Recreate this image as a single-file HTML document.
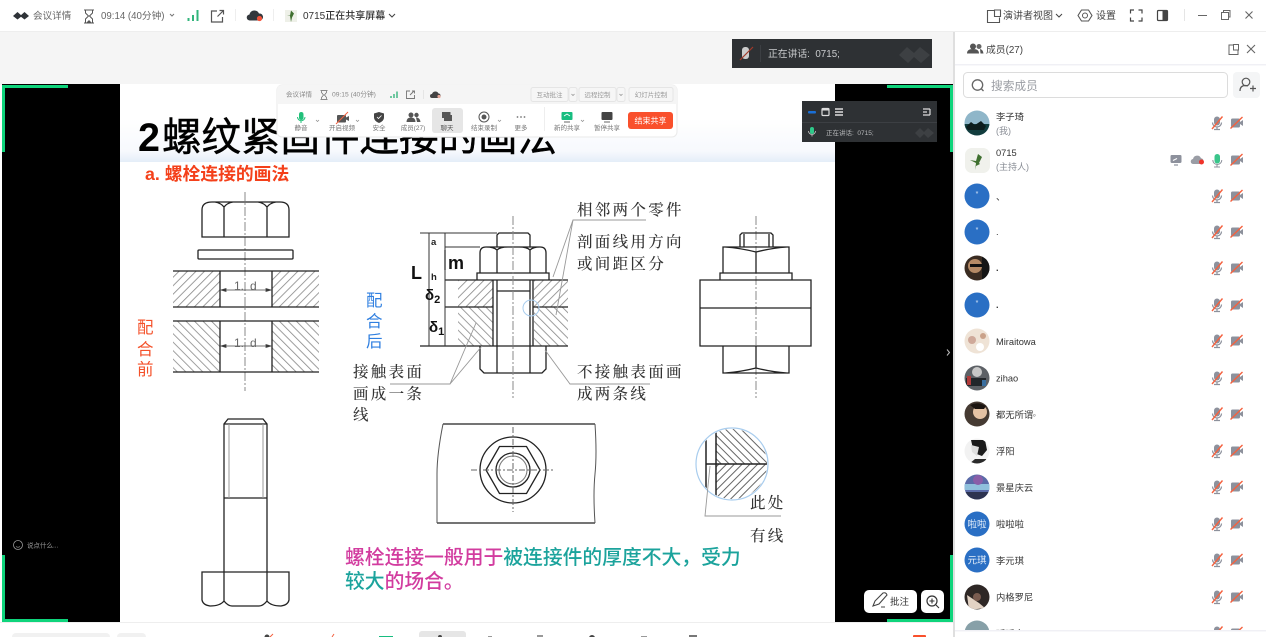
<!DOCTYPE html>
<html lang="zh"><head><meta charset="utf-8"><title>会议</title>
<style>
html,body{margin:0;padding:0;background:#fff;width:1266px;height:637px;overflow:hidden}
svg{display:block;filter:blur(.3px)}
text{font-family:"Liberation Sans","Noto Sans CJK SC",sans-serif}
.sf{font-family:"Liberation Serif","Noto Serif CJK SC",serif;font-size:15.5px;letter-spacing:2.3px;fill:#333;font-weight:500}
.n{font-size:9.3px;fill:#333}
.s{font-size:9px;fill:#8a8e96}
.tb{font-size:6.5px;fill:#777;text-anchor:middle}
.l{stroke:#222;stroke-width:1.3;fill:none}
.t{stroke:#333;stroke-width:1;fill:none}
.g{stroke:#999;stroke-width:.9;fill:none}
.c{stroke:#888;stroke-width:1;stroke-dasharray:9 2 2 2;fill:none}
</style></head><body>
<svg width="1266" height="637" viewBox="0 0 1266 637" xmlns="http://www.w3.org/2000/svg">
<defs>
<pattern id="h1" width="6" height="6" patternUnits="userSpaceOnUse" patternTransform="rotate(45)"><rect x="0" width=".8" height="6" fill="#888"/></pattern>
<pattern id="h2" width="6" height="6" patternUnits="userSpaceOnUse" patternTransform="rotate(-45)"><rect x="0" width=".8" height="6" fill="#888"/></pattern>
<pattern id="h3" width="5.5" height="5.5" patternUnits="userSpaceOnUse" patternTransform="rotate(45)"><rect x="0" width="1" height="5.5" fill="#666"/></pattern>
<pattern id="h4" width="5.5" height="5.5" patternUnits="userSpaceOnUse" patternTransform="rotate(-45)"><rect x="0" width="1" height="5.5" fill="#666"/></pattern>
<linearGradient id="tg" x1="0" y1="0" x2="0" y2="1"><stop offset="0" stop-color="#fff"/><stop offset=".75" stop-color="#f7f9fd"/><stop offset="1" stop-color="#e4edf8"/></linearGradient>
<clipPath id="cc"><circle cx="732" cy="464" r="35"/></clipPath>
<clipPath id="a1"><circle cx="977" cy="123" r="12.5"/></clipPath>
<clipPath id="a5"><circle cx="977" cy="268" r="12.5"/></clipPath>
<clipPath id="a7"><circle cx="977" cy="341" r="12.5"/></clipPath>
<clipPath id="a8"><circle cx="977" cy="378" r="12.5"/></clipPath>
<clipPath id="a9"><circle cx="977" cy="414" r="12.5"/></clipPath>
<clipPath id="a10"><circle cx="977" cy="451" r="12.5"/></clipPath>
<clipPath id="a11"><circle cx="977" cy="487" r="12.5"/></clipPath>
<clipPath id="a14"><circle cx="977" cy="597" r="12.5"/></clipPath>
<clipPath id="a15"><circle cx="977" cy="633" r="12.5"/></clipPath>
<g id="mm">
<rect x="-3" y="-6.5" width="6" height="9" rx="3" fill="#8d919c"/>
<path d="M-4.5-.5a4.5 4.5 0 0 0 9 0M0 4v2.500M-3 6.500h6" stroke="#8d919c" stroke-width="1.200" fill="none"/>
<path d="M-5 6L5.500-6.500" stroke="#f4613f" stroke-width="1.400"/>
</g>
<g id="mc">
<rect x="-6" y="-4.5" width="9" height="9" rx="1.500" fill="#8d919c"/><path d="M3-1l3-2v6l-3-2z" fill="#8d919c"/>
<path d="M-6.500 5.500L5.500-6" stroke="#f4613f" stroke-width="1.400"/>
</g>
<g id="ic"><use href="#mm" x="1217"/><use href="#mc" x="1237"/></g>
</defs>

<!-- base -->
<rect width="1266" height="637" fill="#fff"/>
<rect x="0" y="31" width="955" height="54" fill="#f5f5f5"/>
<rect x="0" y="31" width="1266" height="1" fill="#eeeeee"/>

<!-- top bar -->
<path d="M13 16l4.500-4 4.500 4-4.500 3.500zM20 16l4.500-4 4.500 4-4.500 3.500z" fill="#2f3338"/>
<text x="33" y="19" font-size="9.600" fill="#666">会议详情</text>
<path d="M84 10h10M84 23h10M85.500 10.500v2.500l3 3-3 3v3.500M92.500 10.500v2.500l-3 3 3 3v3.500" stroke="#555" stroke-width="1" fill="none"/><path d="M86.500 22.500l2.500-2.500 2.500 2.500z" fill="#555"/>
<text x="101" y="19" font-size="9.700" fill="#666">09:14 (40分钟)</text>
<path d="M170 14l2 2 2-2" stroke="#777" fill="none"/>
<path d="M188.500 21v-3M193 21v-6M197.500 21v-11" stroke="#33b57c" stroke-width="2"/>
<path d="M217 11h-5.500v11h11v-5M217.500 16.500l6-6M219.500 10.500h4v4" stroke="#555" stroke-width="1.200" fill="none"/>
<rect x="235" y="9" width="1" height="12" fill="#eee"/>
<path d="M250 20.500a3 3 0 0 1-.5-6 5 5 0 0 1 9.500-1 3.500 3.500 0 0 1 1 7z" fill="#33373c"/><circle cx="259.500" cy="18.500" r="2.600" fill="#f4533a"/>
<rect x="273" y="9" width="1" height="12" fill="#eee"/>
<rect x="285" y="10" width="12" height="12" fill="#eef0e8"/><path d="M291 22l-1-6-3-1 3 .5 1-5 3 3-2 4z" fill="#3f6f2f"/>
<text x="303" y="19" font-size="10" fill="#333" font-weight="500">0715正在共享屏幕</text>
<path d="M389 14l3 3 3-3" stroke="#444" stroke-width="1.100" fill="none"/>

<path d="M994 10.500h-6.500v12h12v-5M994.500 10h6v6.500h-6z" stroke="#555" stroke-width="1.100" fill="none"/>
<text x="1003" y="19" font-size="10" fill="#444">演讲者视图</text>
<path d="M1056 14l3 3 3-3" stroke="#444" fill="none"/>
<circle cx="1085" cy="15.500" r="2.500" stroke="#555" fill="none"/><path d="M1081.500 10h7l3.500 5.500-3.500 5.500h-7l-3.500-5.500z" stroke="#555" stroke-width="1.100" fill="none" stroke-linejoin="round"/>
<text x="1096" y="19" font-size="10" fill="#444">设置</text>
<path d="M1130.500 13.500v-3.500h3.500M1138.500 10h3.500v3.500M1142 17.500v3.500h-3.500M1134 21h-3.500v-3.500" stroke="#444" stroke-width="1.200" fill="none"/>
<rect x="1157.500" y="10.500" width="10" height="10" rx="1" fill="#fff" stroke="#444" stroke-width="1.200"/><rect x="1162.500" y="10.500" width="5" height="10" fill="#444"/>
<rect x="1184" y="9" width="1" height="12" fill="#e5e5e5"/>
<rect x="1198" y="15" width="9" height="1" fill="#666"/>
<rect x="1221.500" y="12.500" width="7" height="7" fill="#fff" stroke="#666"/><path d="M1223.500 12v-1.500h6.500v6.500h-1.500" stroke="#666" fill="none"/>
<path d="M1245.500 11.500l7 7M1252.500 11.500l-7 7" stroke="#666" stroke-width="1.100"/>

<!-- shared area -->
<rect x="2" y="84" width="951" height="538" fill="#000"/>
<rect x="120" y="84" width="715" height="538" fill="#fff"/>
<rect x="120" y="118" width="715" height="44" fill="url(#tg)"/>
<rect x="953" y="32" width="2" height="605" fill="#dfdfdf"/>
<g fill="#0fd47c">
<rect x="2" y="85" width="66" height="3"/><rect x="2" y="85" width="3" height="67"/>
<rect x="887" y="85" width="66" height="3"/><rect x="950" y="85" width="3" height="67"/>
<rect x="2" y="619" width="66" height="3"/><rect x="2" y="555" width="3" height="67"/>
<rect x="887" y="619" width="66" height="3"/><rect x="950" y="555" width="3" height="67"/>
</g>
<path d="M947 349.500l2.500 3-2.500 3" stroke="#bbb" stroke-width="1" fill="none"/>

<!-- slide -->
<text x="138" y="151" font-size="39.500" font-weight="700" fill="#000" font-family="'Liberation Sans'">2</text>
<text x="162" y="151" font-size="39.500" fill="#000" font-weight="400" stroke="#000" stroke-width=".5">螺纹紧固件连接的画法</text>
<text x="145" y="180" font-size="17.800" font-weight="700" fill="#f4401a">a. 螺栓连接的画法</text>
<g font-size="16.500" fill="#f4512a"><text x="137" y="333">配</text><text x="137" y="355">合</text><text x="137" y="375">前</text></g>
<g font-size="16.500" fill="#2f7fe0"><text x="366" y="306">配</text><text x="366" y="327">合</text><text x="366" y="347">后</text></g>

<!-- left assembly -->
<path class="c" d="M245 192V391"/>
<path class="l" d="M202 237V210q0-8 10-8h68q9 0 9 8v27zM224 207V237M267 207V237M215 202q6 1 9 5 3-4 9-5M258 202q6 1 9 5 3-4 9-5"/>
<rect class="l" x="198" y="250" width="95" height="9" rx="1"/>
<rect x="173" y="271" width="47" height="36" fill="url(#h1)"/><rect x="272" y="271" width="47" height="36" fill="url(#h1)"/>
<rect x="173" y="321" width="47" height="51" fill="url(#h2)"/><rect x="272" y="321" width="47" height="51" fill="url(#h2)"/>
<path class="l" d="M173 271H319M173 307H319M173 321H319M173 372H319M220 271V307M272 271V307M220 321V372M272 321V372"/>
<g stroke="#444" stroke-width=".8" fill="#333"><path d="M221 290H271M221 346H271"/><path d="M221 290l5-1.500v3zM271 290l-5-1.500v3zM221 346l5-1.500v3zM271 346l-5-1.500v3z"/></g>
<text x="234" y="290" font-size="12" fill="#666">1.</text><text x="250" y="290" font-size="12" fill="#666">d</text>
<text x="234" y="347" font-size="12" fill="#666">1.</text><text x="250" y="347" font-size="12" fill="#666">d</text>

<!-- center assembly -->
<rect x="458" y="280" width="35" height="27" fill="url(#h1)"/><rect x="534" y="280" width="34" height="27" fill="url(#h1)"/>
<rect x="458" y="307" width="35" height="39" fill="url(#h2)"/><rect x="534" y="307" width="34" height="39" fill="url(#h2)"/>
<path class="l" d="M497 247V235l2-2h29l2 2v12M480 273V253q0-6 6-6H540q6 0 6 6v20M477 273H549V280H477zM497 280V346M530 280V346M493 280V346M533 280V346M497 291H530M445 280H568M445 307H493M533 307H568M420 346H568M480 346V369l4 4H542l4-4V346M497 346V373M530 346V373M497 250V273M530 250V273M486 247q8 0 11 3 3-3 11-3M519 247q8 0 11 3 3-3 10-3"/>
<path class="c" d="M513 216V398"/>
<path class="t" d="M420 233H497M445 247H480M429 233V346M445 233V346" stroke-width=".9"/>
<path d="M445 250v20" stroke="#222" stroke-width="1.200" fill="none"/>
<text x="411" y="279" font-size="18" font-weight="700" fill="#111">L</text>
<text x="431" y="245" font-size="9.500" font-weight="700" fill="#222">a</text>
<text x="431" y="280" font-size="9.500" font-weight="700" fill="#222">h</text>
<text x="448" y="269" font-size="18" font-weight="700" fill="#111">m</text>
<text x="425" y="300" font-size="15" font-weight="700" fill="#111">δ<tspan font-size="11" dy="3">2</tspan></text>
<text x="429" y="332" font-size="15" font-weight="700" fill="#111">δ<tspan font-size="11" dy="3">1</tspan></text>
<path class="g" d="M646 220H573L553 277M573 220L556 315M390 384H450L476 323M450 384L482 346M650 384H570L545 350"/>
<circle cx="531" cy="308" r="8" fill="none" stroke="#a9cdee"/>
<text class="sf" x="577" y="215">相邻两个零件</text>
<text class="sf" x="577" y="247">剖面线用方向</text>
<text class="sf" x="577" y="269">或间距区分</text>
<text class="sf" x="353" y="377">接触表面</text>
<text class="sf" x="353" y="399">画成一条</text>
<text class="sf" x="353" y="420">线</text>
<text class="sf" x="577" y="377">不接触表面画</text>
<text class="sf" x="577" y="399">成两条线</text>
<text class="sf" x="750" y="508">此处</text>
<text class="sf" x="750" y="541">有线</text>

<!-- right assembly -->
<path class="c" d="M756 216V398"/>
<path class="l" d="M740 247V235l2-2h29l2 2v12M744 234V247M769 234V247M723 273V247H789V273M725 247q15 1 31 5 16-4 31-5M756 252V273M720 280V273H792V280M700 280H811V346H700zM700 308H811M723 346V373H789V346M725 373q15-1 31-5 16 4 31 5M756 346V368" stroke-width="1.100"/>

<!-- bolt -->
<path class="l" d="M224 572V424l4-5h35l4 5V572M224 424H267M224 498H267M202 572H289V600Q288 605 281 606Q271 606 267 601Q263 606 259 606H232Q228 606 224 601Q220 606 210 606Q203 605 202 600ZM224 572V601M267 572V601"/>
<path d="M229 424V498M263 424V498" stroke="#999"/>

<!-- top view -->
<path class="l" d="M443 424H595M437 523H595" stroke-width="1.500"/>
<path d="M443 424q-6 30-6 50t0 49M595 424q2 30 0 50t0 49" stroke="#555" stroke-width="1" fill="none"/>
<circle cx="513" cy="470" r="33" class="l"/><circle cx="513" cy="470" r="17" class="l"/><circle cx="513" cy="470" r="14" fill="none" stroke="#777"/>
<path class="l" d="M486 470L499.500 446.500H526.500L540 470 526.500 493.500H499.500Z"/>
<path d="M471 470H555M513 427V512" stroke="#666" stroke-dasharray="6 2 2 2" fill="none"/>

<!-- detail -->
<circle cx="732" cy="464" r="36" fill="none" stroke="#a9cdee" stroke-width="1.200"/>
<g clip-path="url(#cc)">
<rect x="716" y="425" width="55" height="39" fill="url(#h4)"/>
<rect x="716" y="464" width="55" height="39" fill="url(#h3)"/>
<path d="M706 425V505M716 425V505M706 464H768" stroke="#222" stroke-width="1.500" fill="none"/>
</g>
<path class="g" d="M710 466L705 516H781"/>

<!-- purple text -->
<text x="345" y="564" font-size="19.800" font-weight="500"><tspan fill="#d23c9f">螺栓连接一般用于</tspan><tspan fill="#1ba39c">被连接件的厚度不大，受力</tspan></text>
<text x="345" y="588" font-size="19.800" font-weight="500"><tspan fill="#1ba39c">较大</tspan><tspan fill="#d23c9f">的场合。</tspan></text>

<!-- say something -->
<circle cx="18" cy="545" r="4.500" fill="none" stroke="#999" stroke-width=".8"/><path d="M16 546.500q2 1.500 4 0" stroke="#999" stroke-width=".7" fill="none"/>
<text x="27" y="547.500" font-size="6.500" fill="#999">说点什么...</text>

<!-- annotate buttons -->
<rect x="864" y="590" width="53" height="23" rx="5" fill="#fff"/><rect x="921" y="590" width="23" height="23" rx="5" fill="#fff"/>
<path d="M873 606l2-5 8-8q3-1 4 2l-8 9zM881 607h4" stroke="#444" stroke-width="1.100" fill="none"/>
<text x="890" y="605" font-size="9.500" fill="#333">批注</text>
<circle cx="932" cy="601" r="5" fill="none" stroke="#333" stroke-width="1.200"/><path d="M936 605l3 3M929.500 601h5M932 598.500v5" stroke="#333" stroke-width="1.100"/>

<!-- floating toolbar -->
<rect x="277" y="85" width="400" height="52" rx="5" fill="#fff" stroke="#eaeaea"/>
<path d="M277 104V90q0-5 5-5H672q5 0 5 5V104z" fill="#f5f5f5"/>
<text x="286" y="96.500" font-size="6.500" fill="#888">会议详情</text>
<path d="M320.500 90.500h7M320.500 99.500h7M321.500 91v1.500l2 2.500-2 2.500v1.500M326.500 91v1.500l-2 2.500 2 2.500v1.500" stroke="#666" stroke-width=".7" fill="none"/>
<text x="332" y="96.500" font-size="6.700" fill="#888">09:15 (40分钟)</text>
<path d="M391 98v-2M394 98v-4M397 98v-6.500" stroke="#45b985" stroke-width="1.500"/>
<path d="M410 91h-3.500v7.500h8v-3.500M410 95l4-4M412 91h2.500v2.500" stroke="#777" stroke-width=".9" fill="none"/>
<rect x="423" y="90" width="1" height="9" fill="#e5e5e5"/>
<path d="M432 98a2 2 0 0 1 0-4 3.500 3.500 0 0 1 6.500-.5 2.300 2.300 0 0 1 .5 4.500z" fill="#444"/><circle cx="439" cy="96.500" r="1.600" fill="#e9a99b"/>
<g fill="#f6f6f6" stroke="#e5e5e5"><rect x="531" y="87.500" width="37" height="14" rx="2"/><rect x="569" y="87.500" width="8" height="14" rx="2"/><rect x="579" y="87.500" width="37" height="14" rx="2"/><rect x="617" y="87.500" width="8" height="14" rx="2"/><rect x="629" y="87.500" width="44" height="14" rx="2"/></g>
<g font-size="6.500" fill="#999" text-anchor="middle"><text x="549.500" y="97">互动批注</text><text x="597.500" y="97">远程控制</text><text x="651" y="97">幻灯片控制</text></g>
<path d="M571.500 94l1.500 1.500 1.500-1.500M619.500 94l1.500 1.500 1.500-1.500" stroke="#888" stroke-width=".7" fill="none"/>

<rect x="432" y="108" width="31" height="25" rx="3" fill="#e6e6e6"/>
<rect x="299" y="112" width="4.500" height="8" rx="2.200" fill="#22c07a"/><path d="M297.500 117a3.700 3.700 0 0 0 7.500 0M301 121v2" stroke="#22c07a" fill="none"/>
<g><rect x="337" y="115" width="9" height="7.500" rx="1" fill="#555"/><path d="M346 117.500l3-1.500v5l-3-1.500z" fill="#555"/><path d="M336 124l12-12" stroke="#f4613f"/></g>
<path d="M379 112l5 1.500v4q0 3.500-5 5.500-5-2-5-5.500v-4z" fill="#444"/><path d="M377 117l1.500 1.500 3-3" stroke="#fff" stroke-width=".8" fill="none"/>
<circle cx="411" cy="115" r="2.500" fill="#555"/><circle cx="416.500" cy="115" r="2.200" fill="#555"/><path d="M406.500 122q0-4.500 4.500-4.500t4.500 4.500zM416 117.500q4 0 4.500 4.500h-3.500z" fill="#555"/>
<path d="M442 112h8.500v6h-1.500v3l-3-3h-4z" fill="#555"/><rect x="444" y="115" width="8" height="6" fill="#555"/>
<circle cx="484" cy="117" r="5" fill="none" stroke="#555"/><circle cx="484" cy="117" r="2.500" fill="#555"/>
<g fill="#777"><circle cx="517.500" cy="117" r=".9"/><circle cx="521" cy="117" r=".9"/><circle cx="524.500" cy="117" r=".9"/></g>
<rect x="544" y="107" width="1" height="24" fill="#eee"/>
<rect x="561.500" y="112" width="11" height="8" rx="1" fill="#17bd80"/><path d="M564 116l3-2 3 2" stroke="#fff" stroke-width=".8" fill="none"/><path d="M564 122h6" stroke="#666"/>
<rect x="601.500" y="112" width="11" height="8" rx="1" fill="#444"/><path d="M604 122h6" stroke="#666"/>
<g class="tb"><text class="tb" x="301" y="130">静音</text><text class="tb" x="342" y="130">开启视频</text><text class="tb" x="379" y="130">安全</text><text class="tb" x="413" y="130">成员(27)</text><text class="tb" x="447" y="130" style="fill:#555">聊天</text><text class="tb" x="484" y="130">结束录制</text><text class="tb" x="521" y="130">更多</text><text class="tb" x="567" y="130">新的共享</text><text class="tb" x="607" y="130">暂停共享</text></g>
<path d="M316 120l1.500 1.500 1.500-1.500M356 120l1.500 1.500 1.500-1.500M498 120l1.500 1.500 1.500-1.500M581 120l1.500 1.500 1.500-1.500" stroke="#888" stroke-width=".7" fill="none"/>
<rect x="628" y="112" width="45" height="17" rx="3" fill="#f9502c"/>
<text x="650.500" y="123.500" font-size="8" fill="#fff" text-anchor="middle">结束共享</text>

<!-- speaker bar -->
<rect x="732" y="39" width="200" height="29" fill="#2e3134"/>
<rect x="742" y="47" width="7" height="12" rx="3" fill="#ccc"/><path d="M740 60l13-13" stroke="#a33a2a" stroke-width="1.200"/>
<rect x="760" y="45" width="1" height="17" fill="#3c3f43"/>
<text x="768" y="57" font-size="9.800" fill="#c9cbcd">正在讲话:&#160;&#160;0715;</text>
<path d="M899 55l8-8 7 6 6-6 10 8-9 8-7-6-6 6z" fill="#3d4043"/>

<!-- small float -->
<rect x="802" y="101" width="135" height="41" fill="#2e3134"/>
<rect x="808" y="111" width="8" height="2.500" rx="1" fill="#1a6fd6"/>
<rect x="822" y="108.500" width="7" height="7" rx="1" fill="none" stroke="#ddd" stroke-width="1.200"/><rect x="822" y="108.500" width="7" height="2" fill="#ddd"/>
<path d="M835 109h8M835 112h8M835 115h8" stroke="#ddd" stroke-width="1.500"/>
<path d="M923 109h7M923 112h4M923 115h7M930 109v6" stroke="#ddd" stroke-width="1.200" fill="none"/>
<rect x="802" y="122" width="135" height="1" fill="#3c3f43"/>
<rect x="810" y="127" width="4" height="7" rx="2" fill="#2ec98a"/><path d="M808.500 131a3.500 3.500 0 0 0 7 0M812 135v1.500" stroke="#ccc" stroke-width=".8" fill="none"/>
<text x="826" y="135" font-size="6.500" fill="#b5b7b9">正在讲话:&#160;&#160;0715;</text>
<path d="M915 133l5-5 4 4 4-4 6 5-6 5-4-4-4 4z" fill="#3d4043"/>

<!-- bottom toolbar sliver -->
<rect x="0" y="622" width="953" height="15" fill="#fff"/>
<rect x="0" y="622" width="953" height="1" fill="#eeeeee"/>
<rect x="12" y="633" width="98" height="8" rx="4" fill="#f1f1f1"/><rect x="117" y="633" width="29" height="8" rx="4" fill="#f1f1f1"/>
<rect x="419" y="631" width="47" height="10" rx="3" fill="#e6e6e6"/>
<g fill="#444"><circle cx="267" cy="637" r="2.500"/><circle cx="440" cy="637" r="2"/><circle cx="592" cy="638" r="3"/><rect x="537" y="635" width="6" height="2" fill="#999"/><rect x="488" y="636" width="4" height="1" fill="#999"/><rect x="641" y="636" width="6" height="1" fill="#999"/><rect x="689" y="635" width="8" height="2" fill="#777"/></g>
<path d="M270 637l3-3M332 637l2-3" stroke="#f4613f"/>
<rect x="379" y="636" width="14" height="2" fill="#17bd80"/><rect x="913" y="635" width="13" height="3" rx="1" fill="#f9502c"/>

<!-- panel header -->
<circle cx="973" cy="46.500" r="3" fill="#555"/><circle cx="979" cy="46.500" r="2.500" fill="#666"/><path d="M967 53.500q0-4.500 6-4.500t6 4.500zM980 49q3 .5 3.500 4.500h-3z" fill="#555"/>
<text x="986" y="53" font-size="9.800" fill="#444">成员(27)</text>
<path d="M1234 45h-5v9.500h9v-4M1233.500 44.500h5v5.500h-5z" stroke="#666" fill="none"/>
<path d="M1247 45l8 8M1255 45l-8 8" stroke="#666" stroke-width="1.100"/>
<rect x="955" y="64" width="311" height="1.500" fill="#f0f0f5"/>
<rect x="963.500" y="72.500" width="264" height="25" rx="4" fill="#fff" stroke="#dcdcdc"/>
<circle cx="977.500" cy="85" r="5.200" fill="none" stroke="#666" stroke-width="1.300"/><path d="M981.500 89l2 2" stroke="#666" stroke-width="1.300"/>
<text x="991" y="90" font-size="11.700" fill="#9a9da3">搜索成员</text>
<rect x="1233" y="72" width="27" height="26" rx="4" fill="#f4f5f6"/>
<circle cx="1246" cy="82" r="3.800" fill="none" stroke="#555" stroke-width="1.200"/><path d="M1240 91q0-5.500 5.500-5.500 1.500 0 2.500.5M1250 88.500h6M1253 85.500v6" stroke="#555" stroke-width="1.200" fill="none"/>

<!-- avatars -->
<g clip-path="url(#a1)"><rect x="964" y="110" width="26" height="26" fill="#8fb6c9"/><rect x="964" y="124" width="26" height="12" fill="#123d3e"/><path d="M966 127l5-5 4 3 6-4 5 5-2 4H968z" fill="#0d1c1c"/></g>
<rect x="965" y="148" width="25" height="25" rx="7" fill="#f0f1ec"/><path d="M975 170l1-7-6-3 6 1 2-7 4 3-3 6 1 1-4 2z" fill="#3f7030"/>
<circle cx="977" cy="196" r="12.500" fill="#2a6fc4"/><text x="977" y="196" font-size="7" fill="#d8e6f7" text-anchor="middle">*</text>
<circle cx="977" cy="232" r="12.500" fill="#2a6fc4"/><text x="977" y="232" font-size="7" fill="#d8e6f7" text-anchor="middle">*</text>
<g clip-path="url(#a5)"><rect x="964" y="255" width="26" height="26" fill="#3a2c22"/><circle cx="975" cy="266" r="7" fill="#b58a66"/><rect x="970" y="264" width="12" height="3" fill="#111"/><rect x="982" y="255" width="8" height="26" fill="#151515"/></g>
<circle cx="977" cy="305" r="12.500" fill="#2a6fc4"/><text x="977" y="305" font-size="7" fill="#d8e6f7" text-anchor="middle">*</text>
<g clip-path="url(#a7)"><rect x="964" y="328" width="26" height="26" fill="#efe3d6"/><circle cx="972" cy="340" r="4" fill="#cfa99a"/><circle cx="983" cy="336" r="3" fill="#caa28a"/><circle cx="980" cy="347" r="4" fill="#fff"/></g>
<g clip-path="url(#a8)"><rect x="964" y="365" width="26" height="26" fill="#5d6166"/><circle cx="977" cy="372" r="5" fill="#c8c8c8"/><rect x="966" y="378" width="20" height="8" fill="#22262a"/><rect x="967" y="376" width="4" height="9" fill="#b03a3a"/><rect x="982" y="380" width="4" height="6" fill="#3a6fa0"/></g>
<g clip-path="url(#a9)"><rect x="964" y="401" width="26" height="26" fill="#453a32"/><circle cx="980" cy="412" r="7" fill="#e4c2a4"/><path d="M970 405q8-4 16 1l-2 3-9 0z" fill="#1b1410"/></g>
<g clip-path="url(#a10)"><rect x="964" y="438" width="26" height="26" fill="#f2f2f2"/><path d="M971 440h14l2 10-5 6-8-3z" fill="#1a1a1a"/><path d="M971 445l8 2-2 9-5-4z" fill="#ddd"/><path d="M969 464l6-5 11 0 3 5z" fill="#2a2a2a"/></g>
<g clip-path="url(#a11)"><rect x="964" y="474" width="26" height="26" fill="#5a6ba8"/><rect x="964" y="484" width="26" height="6" fill="#8fc0dc"/><rect x="964" y="492" width="26" height="8" fill="#2d3350"/><circle cx="978" cy="480" r="5" fill="#8a5ea8"/></g>
<circle cx="977" cy="524" r="12.500" fill="#2a6fc4"/><text x="977" y="527.500" font-size="9.500" fill="#e4eef9" text-anchor="middle">啦啦</text>
<circle cx="977" cy="560" r="12.500" fill="#2a6fc4"/><text x="977" y="563.500" font-size="9.500" fill="#e4eef9" text-anchor="middle">元琪</text>
<g clip-path="url(#a14)"><rect x="964" y="584" width="26" height="26" fill="#2e2725"/><path d="M967 595l12 8 6 5-16 2z" fill="#e2d2c4"/><circle cx="977" cy="597" r="4" fill="#7a5c50"/></g>
<g clip-path="url(#a15)"><rect x="964" y="620" width="26" height="10" fill="#87a0a8"/></g>

<!-- names -->
<text class="n" x="996" y="120">李子琦</text><text class="s" x="996" y="134">(我)</text>
<text class="n" x="996" y="156">0715</text><text class="s" x="996" y="170">(主持人)</text>
<text class="n" x="996" y="200">、</text>
<text class="n" x="996" y="235">.</text>
<text class="n" x="996" y="271" font-weight="700">.</text>
<text class="n" x="996" y="308" font-weight="700">.</text>
<text class="n" x="996" y="345">Miraitowa</text>
<text class="n" x="996" y="381.500">zihao</text>
<text class="n" x="996" y="418">都无所谓<tspan font-size="6">ᵒ</tspan></text>
<text class="n" x="996" y="454.500">浮阳</text>
<text class="n" x="996" y="491">景星庆云</text>
<text class="n" x="996" y="527.500">啦啦啦</text>
<text class="n" x="996" y="564">李元琪</text>
<text class="n" x="996" y="600.500">内格罗尼</text>

<!-- row icons -->
<use href="#ic" y="123"/>
<use href="#mc" x="1237" y="160"/>
<rect x="1170.500" y="155" width="11" height="8" rx="1.200" fill="#8d919c"/><path d="M1174 165h4" stroke="#8d919c" stroke-width="1.200"/><path d="M1173 160.500l4-2" stroke="#fff"/>
<path d="M1193.500 164a2.500 2.500 0 0 1-.5-5 4.200 4.200 0 0 1 8-.8 3 3 0 0 1 .5 5.800z" fill="#9a9da5"/><circle cx="1201.500" cy="162" r="2.500" fill="#f0332a"/>
<rect x="1214.500" y="154" width="5.500" height="9.500" rx="2.700" fill="#3ac58b"/><path d="M1212.800 160a4.500 4.500 0 0 0 9 0M1217 165v2M1214 167h6" stroke="#8d919c" fill="none"/>
<use href="#ic" y="196"/><use href="#ic" y="232"/><use href="#ic" y="268"/><use href="#ic" y="305"/><use href="#ic" y="341"/><use href="#ic" y="378"/><use href="#ic" y="414"/><use href="#ic" y="451"/><use href="#ic" y="487"/><use href="#ic" y="524"/><use href="#ic" y="560"/><use href="#ic" y="597"/><use href="#ic" y="633"/>
<text class="n" x="996" y="637">瑶瑶人</text>

<rect x="955" y="630" width="311" height="7" fill="#fff"/>
<rect x="955" y="630" width="311" height="1.500" fill="#f0f0f5"/>
</svg>
</body></html>
